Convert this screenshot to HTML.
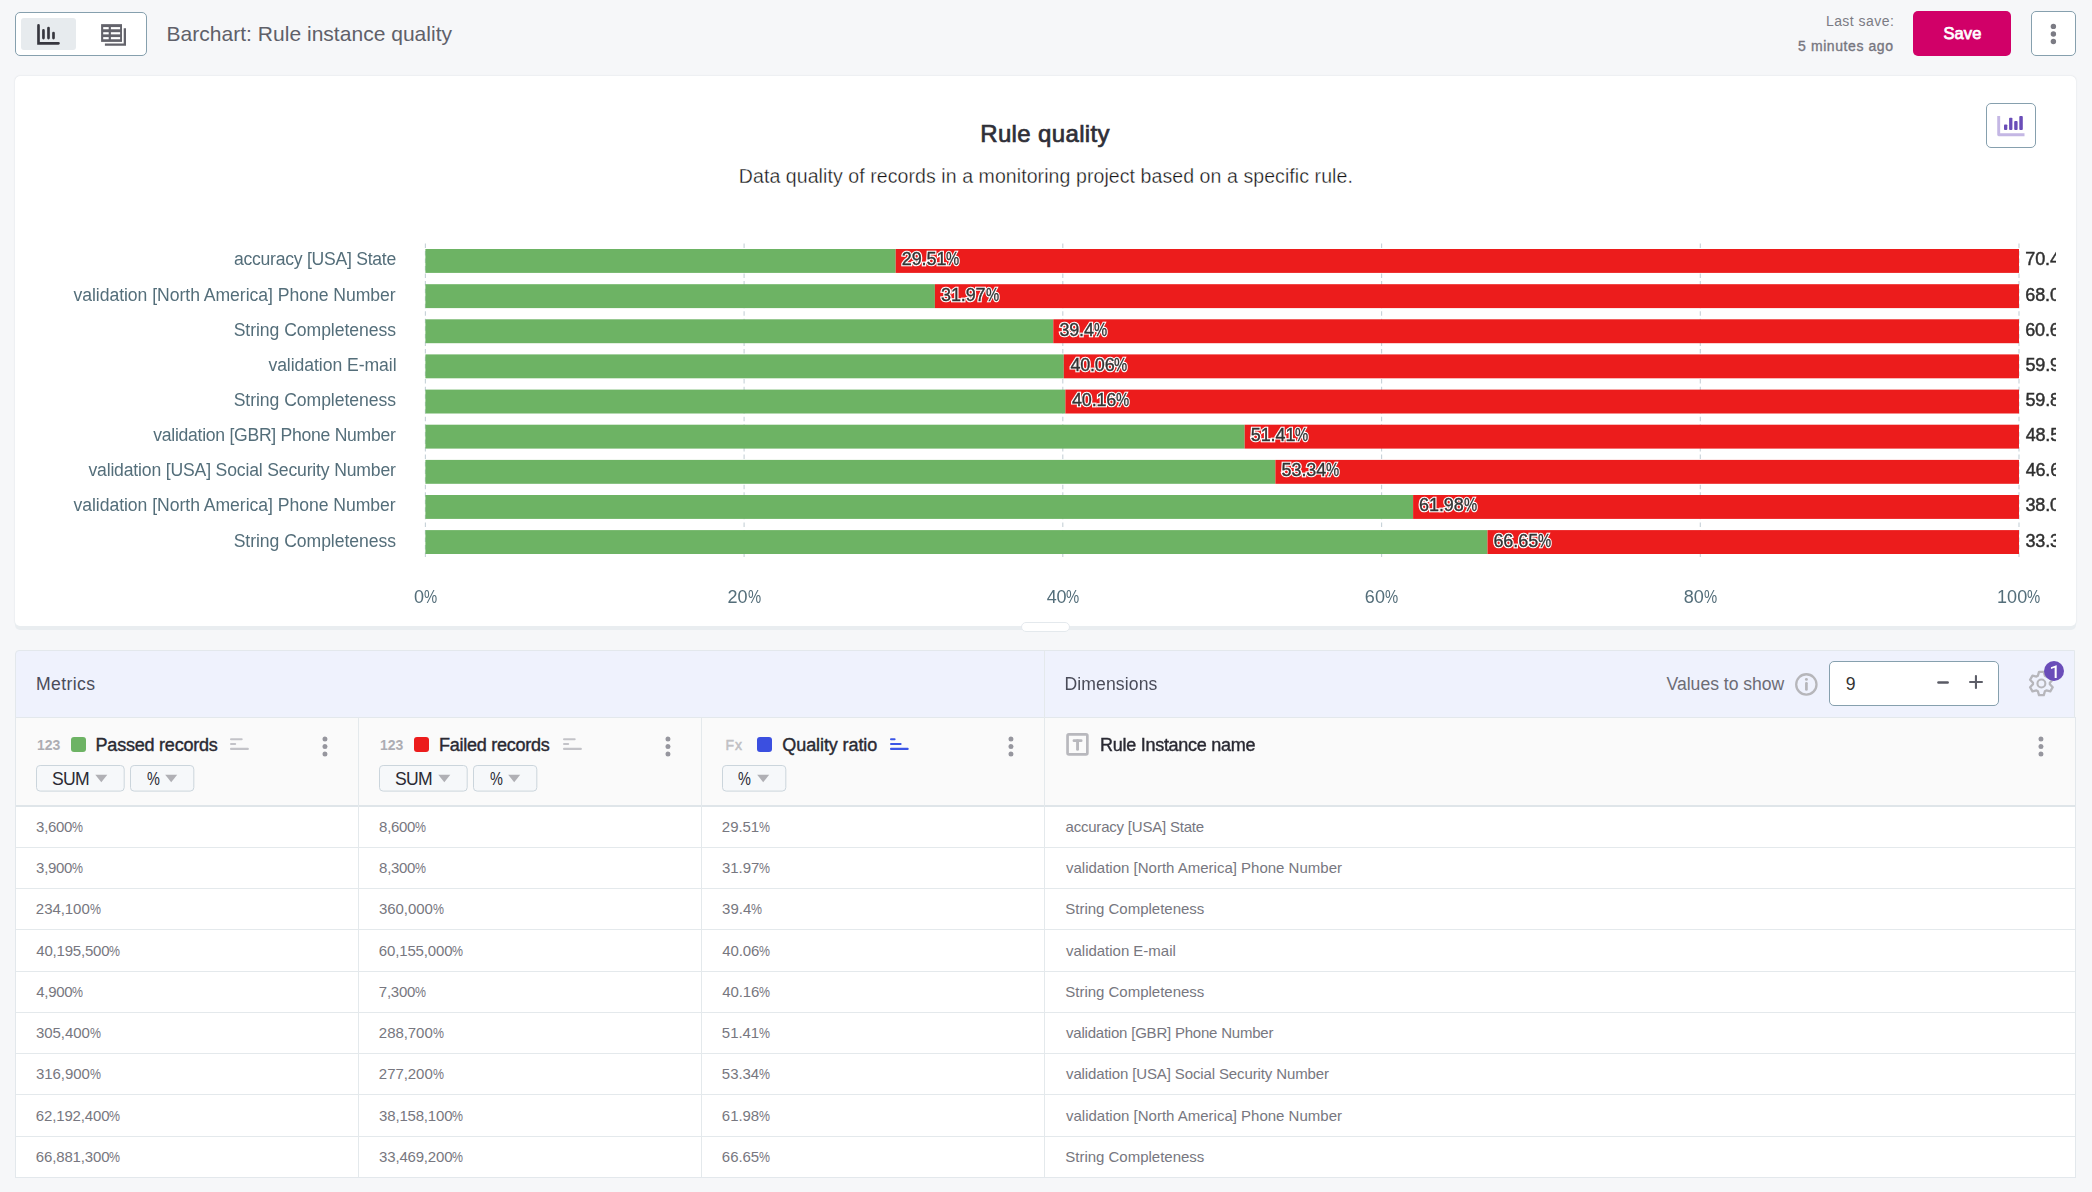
<!DOCTYPE html>
<html><head><meta charset="utf-8"><title>Barchart: Rule instance quality</title>
<style>
html,body{margin:0;padding:0}
body{width:2092px;height:1192px;background:#f6f7f9;position:relative;overflow:hidden;font-family:"Liberation Sans",sans-serif;color:#333}
.abs{position:absolute}
.t{position:absolute;white-space:pre;line-height:1}
.card{position:absolute;left:15px;top:76px;width:2061px;height:550px;background:#fff;border-radius:5px;box-shadow:0 4px 0 #e9edf0,0 0 1.5px rgba(60,80,100,.22)}
.btn{position:absolute;box-sizing:border-box;background:#fff;border:1px solid #86a0ae;border-radius:5px}
.chip{position:absolute;box-sizing:border-box;background:#f5f7fa;border:1px solid #c9d4db;border-radius:5px;height:26.4px;top:765.2px}
.tri{position:absolute;width:0;height:0;border-left:6.3px solid transparent;border-right:6.3px solid transparent;border-top:7.7px solid #b1b1b6;top:774.5px}
.hl{position:absolute;height:1px;background:#e4e9ec;left:16px;width:2059px}
.vl{position:absolute;width:1px;background:#e4e9ec}
.dot{position:absolute;width:5.2px;height:5.2px;border-radius:50%;background:#8f8f96}
.pc{display:inline-block;transform:scaleX(.823);transform-origin:0 50%}
.clipr{position:absolute;left:0;top:0;width:2056px;height:640px;overflow:hidden;will-change:transform}
</style></head><body>

<div class="btn" style="left:15px;top:12px;width:132px;height:44px"></div>
<div class="abs" style="left:21px;top:18px;width:55px;height:32px;background:#e7ebee;border-radius:3px"></div>
<svg class="abs" style="left:33px;top:20px" width="30" height="28" viewBox="0 0 30 28">
<path d="M5.5 5.4 V23.3 H25.5" fill="none" stroke="#36363e" stroke-width="2.65" stroke-linecap="round" stroke-linejoin="miter"/>
<path d="M10.45 10.4 V18.1 M15.5 8.1 V18.1 M20.5 13.1 V18.1" fill="none" stroke="#36363e" stroke-width="2.65" stroke-linecap="round"/>
</svg>
<svg class="abs" style="left:99px;top:22px" width="30" height="26" viewBox="0 0 30 26">
<path d="M5.9 22.6 H25.85 V6.2" fill="none" stroke="#63636b" stroke-width="2.3"/>
<rect x="2.1" y="2.15" width="20.9" height="17.75" fill="#63636b"/>
<rect x="4.2" y="5.1" width="5.5" height="2.15" fill="#fff"/><rect x="11.9" y="5.1" width="9.2" height="2.15" fill="#fff"/>
<rect x="4.2" y="10.2" width="5.5" height="2.15" fill="#fff"/><rect x="11.9" y="10.2" width="9.2" height="2.15" fill="#fff"/>
<rect x="4.2" y="15.1" width="5.5" height="2.15" fill="#fff"/><rect x="11.9" y="15.1" width="9.2" height="2.15" fill="#fff"/>
</svg>
<div class="t" style="left:166.55px;top:23.00px;font-size:21px;color:#5f6069;letter-spacing:0.023px;">Barchart: Rule instance quality</div>
<div class="t" style="left:1825.90px;top:14.00px;font-size:14px;color:#7b7b84;letter-spacing:0.456px;">Last save:</div>
<div class="t" style="left:1798.10px;top:39.00px;font-size:14px;color:#76767f;letter-spacing:0.575px;-webkit-text-stroke:0.35px #76767f;">5 minutes ago</div>
<div class="abs" style="left:1913px;top:11px;width:98px;height:45px;background:#d10068;border-radius:5px"></div>
<div class="t" style="left:1943.55px;top:25.00px;font-size:16.5px;color:#fff;letter-spacing:0.067px;-webkit-text-stroke:0.75px #fff;">Save</div>
<div class="btn" style="left:2031px;top:11px;width:45px;height:45px"></div>
<svg class="abs" style="left:2048.25px;top:20.50px" width="10.80" height="25.90" viewBox="0 0 10.80 25.90"><circle cx="5.40" cy="5.40" r="2.70" fill="#7b7b84"/><circle cx="5.40" cy="13.00" r="2.70" fill="#7b7b84"/><circle cx="5.40" cy="20.50" r="2.70" fill="#7b7b84"/></svg>
<div class="card"></div>
<div class="t" style="left:980.20px;top:122.00px;font-size:24px;color:#2f2f38;letter-spacing:0.359px;-webkit-text-stroke:0.7px #2f2f38;">Rule quality</div>
<div class="t" style="left:738.80px;top:167.00px;font-size:19.5px;color:#161616;letter-spacing:0.083px;-webkit-text-stroke:0.32px #fff;">Data quality of records in a monitoring project based on a specific rule.</div>
<div class="btn" style="left:1986px;top:103px;width:50px;height:45px"></div>
<svg class="abs" style="left:1994px;top:112px" width="34" height="28" viewBox="0 0 34 28">
<path d="M4.7 4.1 V22.7 H30.5" fill="none" stroke="#c4b7e4" stroke-width="2.9" stroke-linejoin="round"/>
<rect x="10" y="12.4" width="3.3" height="5.5" rx="0.9" fill="#6a4db8"/><rect x="15.1" y="5.7" width="3.3" height="12.2" rx="0.9" fill="#6a4db8"/>
<rect x="20.2" y="9.1" width="3.4" height="8.8" rx="0.9" fill="#6a4db8"/><rect x="25.3" y="4.1" width="3.5" height="13.8" rx="0.9" fill="#6a4db8"/>
</svg>
<svg class="abs" style="left:0;top:0" width="2092" height="640" viewBox="0 0 2092 640">
<line x1="425.4" y1="243.4" x2="425.4" y2="559.1" stroke="#c6d1d8" stroke-width="1.1" stroke-dasharray="4.5 3.04"/>
<line x1="744.1" y1="243.4" x2="744.1" y2="559.1" stroke="#c6d1d8" stroke-width="1.1" stroke-dasharray="4.5 3.04"/>
<line x1="1062.8" y1="243.4" x2="1062.8" y2="559.1" stroke="#c6d1d8" stroke-width="1.1" stroke-dasharray="4.5 3.04"/>
<line x1="1381.6" y1="243.4" x2="1381.6" y2="559.1" stroke="#c6d1d8" stroke-width="1.1" stroke-dasharray="4.5 3.04"/>
<line x1="1700.3" y1="243.4" x2="1700.3" y2="559.1" stroke="#c6d1d8" stroke-width="1.1" stroke-dasharray="4.5 3.04"/>
<line x1="2019.0" y1="243.4" x2="2019.0" y2="559.1" stroke="#c6d1d8" stroke-width="1.1" stroke-dasharray="4.5 3.04"/>
<rect x="425.4" y="249.0" width="470.3" height="23.9" fill="#6db364"/>
<rect x="895.7" y="249.0" width="1123.3" height="23.9" fill="#ec1c1c"/>
<rect x="425.4" y="284.2" width="509.5" height="23.9" fill="#6db364"/>
<rect x="934.9" y="284.2" width="1084.1" height="23.9" fill="#ec1c1c"/>
<rect x="425.4" y="319.3" width="627.9" height="23.9" fill="#6db364"/>
<rect x="1053.3" y="319.3" width="965.7" height="23.9" fill="#ec1c1c"/>
<rect x="425.4" y="354.4" width="638.4" height="23.9" fill="#6db364"/>
<rect x="1063.8" y="354.4" width="955.2" height="23.9" fill="#ec1c1c"/>
<rect x="425.4" y="389.6" width="640.0" height="23.9" fill="#6db364"/>
<rect x="1065.4" y="389.6" width="953.6" height="23.9" fill="#ec1c1c"/>
<rect x="425.4" y="424.7" width="819.3" height="23.9" fill="#6db364"/>
<rect x="1244.7" y="424.7" width="774.3" height="23.9" fill="#ec1c1c"/>
<rect x="425.4" y="459.9" width="850.0" height="23.9" fill="#6db364"/>
<rect x="1275.4" y="459.9" width="743.6" height="23.9" fill="#ec1c1c"/>
<rect x="425.4" y="495.0" width="987.7" height="23.9" fill="#6db364"/>
<rect x="1413.1" y="495.0" width="605.9" height="23.9" fill="#ec1c1c"/>
<rect x="425.4" y="530.1" width="1062.1" height="23.9" fill="#6db364"/>
<rect x="1487.5" y="530.1" width="531.5" height="23.9" fill="#ec1c1c"/>
</svg>
<div class="clipr">
<div class="t" style="left:233.95px;top:251.00px;font-size:17.6px;color:#546e7a;letter-spacing:-0.261px;">accuracy [USA] State</div>
<div class="t" style="left:901.82px;top:250.00px;font-size:18px;color:#fff;letter-spacing:-0.110px;-webkit-text-stroke:2.7px #fff;">29.51<span class="pc" style="width:13.18px">%</span></div>
<div class="t" style="left:901.82px;top:250.00px;font-size:18px;color:#333;letter-spacing:-0.110px;-webkit-text-stroke:0.35px #333;">29.51<span class="pc" style="width:13.18px">%</span></div>
<div class="t" style="left:2025.25px;top:250.00px;font-size:18px;color:#303030;letter-spacing:-0.110px;-webkit-text-stroke:0.45px #303030;">70.49<span class="pc" style="width:13.18px">%</span></div>
<div class="t" style="left:73.40px;top:287.00px;font-size:17.6px;color:#546e7a;letter-spacing:-0.037px;">validation [North America] Phone Number</div>
<div class="t" style="left:941.02px;top:286.00px;font-size:18px;color:#fff;letter-spacing:-0.110px;-webkit-text-stroke:2.7px #fff;">31.97<span class="pc" style="width:13.18px">%</span></div>
<div class="t" style="left:941.02px;top:286.00px;font-size:18px;color:#333;letter-spacing:-0.110px;-webkit-text-stroke:0.35px #333;">31.97<span class="pc" style="width:13.18px">%</span></div>
<div class="t" style="left:2025.25px;top:286.00px;font-size:18px;color:#303030;letter-spacing:-0.110px;-webkit-text-stroke:0.45px #303030;">68.03<span class="pc" style="width:13.18px">%</span></div>
<div class="t" style="left:233.65px;top:322.00px;font-size:17.6px;color:#546e7a;letter-spacing:-0.050px;">String Completeness</div>
<div class="t" style="left:1059.43px;top:321.00px;font-size:18px;color:#fff;letter-spacing:-0.165px;-webkit-text-stroke:2.7px #fff;">39.4<span class="pc" style="width:13.18px">%</span></div>
<div class="t" style="left:1059.43px;top:321.00px;font-size:18px;color:#333;letter-spacing:-0.165px;-webkit-text-stroke:0.35px #333;">39.4<span class="pc" style="width:13.18px">%</span></div>
<div class="t" style="left:2025.25px;top:321.00px;font-size:18px;color:#303030;letter-spacing:-0.165px;-webkit-text-stroke:0.45px #303030;">60.6<span class="pc" style="width:13.18px">%</span></div>
<div class="t" style="left:268.40px;top:357.00px;font-size:17.6px;color:#546e7a;letter-spacing:-0.056px;">validation E-mail</div>
<div class="t" style="left:1070.45px;top:356.00px;font-size:18px;color:#fff;letter-spacing:-0.210px;-webkit-text-stroke:2.7px #fff;">40.06<span class="pc" style="width:13.18px">%</span></div>
<div class="t" style="left:1070.45px;top:356.00px;font-size:18px;color:#333;letter-spacing:-0.210px;-webkit-text-stroke:0.35px #333;">40.06<span class="pc" style="width:13.18px">%</span></div>
<div class="t" style="left:2025.50px;top:356.00px;font-size:18px;color:#303030;letter-spacing:-0.160px;-webkit-text-stroke:0.45px #303030;">59.94<span class="pc" style="width:13.18px">%</span></div>
<div class="t" style="left:233.65px;top:392.00px;font-size:17.6px;color:#546e7a;letter-spacing:-0.050px;">String Completeness</div>
<div class="t" style="left:1072.04px;top:391.00px;font-size:18px;color:#fff;letter-spacing:-0.210px;-webkit-text-stroke:2.7px #fff;">40.16<span class="pc" style="width:13.18px">%</span></div>
<div class="t" style="left:1072.04px;top:391.00px;font-size:18px;color:#333;letter-spacing:-0.210px;-webkit-text-stroke:0.35px #333;">40.16<span class="pc" style="width:13.18px">%</span></div>
<div class="t" style="left:2025.50px;top:391.00px;font-size:18px;color:#303030;letter-spacing:-0.160px;-webkit-text-stroke:0.45px #303030;">59.84<span class="pc" style="width:13.18px">%</span></div>
<div class="t" style="left:153.30px;top:427.00px;font-size:17.6px;color:#546e7a;letter-spacing:-0.279px;">validation [GBR] Phone Number</div>
<div class="t" style="left:1250.82px;top:426.00px;font-size:18px;color:#fff;letter-spacing:-0.110px;-webkit-text-stroke:2.7px #fff;">51.41<span class="pc" style="width:13.18px">%</span></div>
<div class="t" style="left:1250.82px;top:426.00px;font-size:18px;color:#333;letter-spacing:-0.110px;-webkit-text-stroke:0.35px #333;">51.41<span class="pc" style="width:13.18px">%</span></div>
<div class="t" style="left:2025.75px;top:426.00px;font-size:18px;color:#303030;letter-spacing:-0.210px;-webkit-text-stroke:0.45px #303030;">48.59<span class="pc" style="width:13.18px">%</span></div>
<div class="t" style="left:88.40px;top:462.00px;font-size:17.6px;color:#546e7a;letter-spacing:-0.168px;">validation [USA] Social Security Number</div>
<div class="t" style="left:1281.58px;top:461.00px;font-size:18px;color:#fff;letter-spacing:-0.110px;-webkit-text-stroke:2.7px #fff;">53.34<span class="pc" style="width:13.18px">%</span></div>
<div class="t" style="left:1281.58px;top:461.00px;font-size:18px;color:#333;letter-spacing:-0.110px;-webkit-text-stroke:0.35px #333;">53.34<span class="pc" style="width:13.18px">%</span></div>
<div class="t" style="left:2025.75px;top:461.00px;font-size:18px;color:#303030;letter-spacing:-0.210px;-webkit-text-stroke:0.45px #303030;">46.66<span class="pc" style="width:13.18px">%</span></div>
<div class="t" style="left:73.40px;top:497.00px;font-size:17.6px;color:#546e7a;letter-spacing:-0.037px;">validation [North America] Phone Number</div>
<div class="t" style="left:1419.01px;top:496.00px;font-size:18px;color:#fff;letter-spacing:-0.060px;-webkit-text-stroke:2.7px #fff;">61.98<span class="pc" style="width:13.18px">%</span></div>
<div class="t" style="left:1419.01px;top:496.00px;font-size:18px;color:#333;letter-spacing:-0.060px;-webkit-text-stroke:0.35px #333;">61.98<span class="pc" style="width:13.18px">%</span></div>
<div class="t" style="left:2025.50px;top:496.00px;font-size:18px;color:#303030;letter-spacing:-0.160px;-webkit-text-stroke:0.45px #303030;">38.02<span class="pc" style="width:13.18px">%</span></div>
<div class="t" style="left:233.65px;top:533.00px;font-size:17.6px;color:#546e7a;letter-spacing:-0.050px;">String Completeness</div>
<div class="t" style="left:1493.43px;top:532.00px;font-size:18px;color:#fff;letter-spacing:-0.060px;-webkit-text-stroke:2.7px #fff;">66.65<span class="pc" style="width:13.18px">%</span></div>
<div class="t" style="left:1493.43px;top:532.00px;font-size:18px;color:#333;letter-spacing:-0.060px;-webkit-text-stroke:0.35px #333;">66.65<span class="pc" style="width:13.18px">%</span></div>
<div class="t" style="left:2025.50px;top:532.00px;font-size:18px;color:#303030;letter-spacing:-0.160px;-webkit-text-stroke:0.45px #303030;">33.35<span class="pc" style="width:13.18px">%</span></div>
<div class="t" style="left:413.95px;top:588.00px;font-size:18px;color:#546e7a;letter-spacing:-0.210px;">0<span class="pc" style="width:13.18px">%</span></div>
<div class="t" style="left:727.62px;top:588.00px;font-size:18px;color:#546e7a;letter-spacing:-0.051px;">20<span class="pc" style="width:13.18px">%</span></div>
<div class="t" style="left:1046.84px;top:588.00px;font-size:18px;color:#546e7a;letter-spacing:-0.301px;">40<span class="pc" style="width:13.18px">%</span></div>
<div class="t" style="left:1364.81px;top:588.00px;font-size:18px;color:#546e7a;letter-spacing:0.074px;">60<span class="pc" style="width:13.18px">%</span></div>
<div class="t" style="left:1683.78px;top:588.00px;font-size:18px;color:#546e7a;letter-spacing:-0.051px;">80<span class="pc" style="width:13.18px">%</span></div>
<div class="t" style="left:1996.95px;top:588.00px;font-size:18px;color:#546e7a;letter-spacing:0.168px;">100<span class="pc" style="width:13.18px">%</span></div>
</div>
<div class="abs" style="left:1020.5px;top:622px;width:49px;height:10px;box-sizing:border-box;background:#fff;border:1px solid #e4e9ed;border-radius:5px"></div>
<div class="abs" style="left:15px;top:717px;width:2061px;height:461px;box-sizing:border-box;background:#fff;border:1px solid #e3e8ec"></div>
<div class="abs" style="left:15px;top:650px;width:2060px;height:68px;box-sizing:border-box;background:#eff2fd;border:1px solid #e3e8ec;border-radius:4px 0 0 0"></div>
<div class="abs" style="left:16px;top:718px;width:2059px;height:87px;background:#fafafa"></div>
<div class="hl" style="top:805px;height:2px;background:#dfe5e9"></div>
<div class="vl" style="left:358px;top:718px;height:459px"></div>
<div class="vl" style="left:701px;top:718px;height:459px"></div>
<div class="vl" style="left:1044px;top:651px;height:526px"></div>
<div class="t" style="left:35.90px;top:676.00px;font-size:17.6px;color:#4a4c59;letter-spacing:0.400px;">Metrics</div>
<div class="t" style="left:1064.50px;top:676.00px;font-size:17.6px;color:#4a4c59;letter-spacing:0.106px;">Dimensions</div>
<div class="t" style="left:1666.55px;top:676.00px;font-size:17.6px;color:#6c6c75;letter-spacing:-0.019px;">Values to show</div>
<svg class="abs" style="left:1794px;top:672px" width="25" height="25" viewBox="0 0 25 25">
<circle cx="12.35" cy="12.4" r="10.15" fill="none" stroke="#b6b6ba" stroke-width="2.3"/>
<rect x="11.05" y="10" width="2.7" height="8.8" rx="1.35" fill="#b6b6ba"/><circle cx="12.4" cy="7.4" r="1.45" fill="#b6b6ba"/>
</svg>
<div class="btn" style="left:1829px;top:661px;width:170px;height:45px"></div>
<div class="t" style="left:1845.75px;top:676.00px;font-size:17.6px;color:#333;">9</div>
<svg class="abs" style="left:1930px;top:670px" width="60" height="25" viewBox="0 0 60 25">
<rect x="7.2" y="11.2" width="11.7" height="2.5" rx="1.25" fill="#5a5b65"/>
<rect x="39" y="10.9" width="14" height="2.2" rx="1" fill="#5d5e68"/><rect x="44.9" y="5" width="2.1" height="13.9" rx="1" fill="#5d5e68"/>
</svg>
<svg class="abs" style="left:2026px;top:668px" width="31" height="31" viewBox="0 0 31 31">
<path d="M17.77 3.84 L13.03 3.84 L11.88 7.77 L10.46 8.58 L6.49 7.61 L4.11 11.72 L6.94 14.69 L6.94 16.31 L4.11 19.28 L6.49 23.39 L10.46 22.42 L11.88 23.23 L13.03 27.16 L17.77 27.16 L18.92 23.23 L20.34 22.42 L24.31 23.39 L26.69 19.28 L23.86 16.31 L23.86 14.69 L26.69 11.72 L24.31 7.61 L20.34 8.58 L18.92 7.77 Z" fill="none" stroke="#b6b6bb" stroke-width="2.35" stroke-linejoin="round"/>
<circle cx="15.40" cy="15.50" r="3.95" fill="none" stroke="#b6b6bb" stroke-width="2.1"/>
</svg>
<div class="abs" style="left:2044px;top:661px;width:20px;height:20px;border-radius:50%;background:#6a4db9"></div>
<svg class="abs" style="left:2044px;top:661px" width="20" height="20" viewBox="0 0 20 20">
<path d="M12.7 4.2 V16.95 H10.65 V6.75 L6.95 8.1 V6.25 L12.4 4.2 Z" fill="#fff"/>
</svg>
<div class="t" style="left:36.95px;top:738.00px;font-size:14px;color:#adadb3;letter-spacing:0.050px;font-weight:bold;">123</div>
<div class="abs" style="left:71px;top:737px;width:15px;height:15px;border-radius:3px;background:#6db364"></div>
<div class="t" style="left:95.55px;top:736.00px;font-size:18px;color:#2a2a33;letter-spacing:-0.215px;-webkit-text-stroke:0.4px #2a2a33;">Passed records</div>
<svg class="abs" style="left:230.00px;top:737px" width="20" height="14" viewBox="0 0 20 14"><rect x="0" y="1.20" width="12.70" height="2.1" rx="1" fill="#c3c3c8"/><rect x="0" y="6.00" width="6.20" height="1.95" rx="1" fill="#c3c3c8"/><rect x="0" y="10.70" width="18.90" height="2.2" rx="1" fill="#c3c3c8"/></svg>
<svg class="abs" style="left:319.50px;top:734.00px" width="10.00" height="25.10" viewBox="0 0 10.00 25.10"><circle cx="5.00" cy="5.00" r="2.50" fill="#96969e"/><circle cx="5.00" cy="12.50" r="2.50" fill="#96969e"/><circle cx="5.00" cy="20.10" r="2.50" fill="#96969e"/></svg>
<svg class="abs" style="left:35.20px;top:764px" width="90.70" height="29" viewBox="0 0 90.70 29"><rect x="1.5" y="1.5" width="87.70" height="25.6" rx="3.6" fill="#f6f8fa" stroke="#cbd5dc" stroke-width="1"/><path d="M60.30 10.8 h12 l-6 7.4 Z" fill="#b0b0b5"/></svg>
<div class="t" style="left:52.05px;top:771.00px;font-size:17.6px;color:#2a2a33;letter-spacing:-0.750px;">SUM</div>
<svg class="abs" style="left:129.40px;top:764px" width="66.30" height="29" viewBox="0 0 66.30 29"><rect x="1.5" y="1.5" width="63.30" height="25.6" rx="3.6" fill="#f6f8fa" stroke="#cbd5dc" stroke-width="1"/><path d="M36.20 10.8 h12 l-6 7.4 Z" fill="#b0b0b5"/></svg>
<div class="t" style="left:146.50px;top:771.00px;font-size:17.6px;color:#2a2a33;"><span class="pc" style="width:12.89px">%</span></div>
<div class="t" style="left:379.95px;top:738.00px;font-size:14px;color:#adadb3;letter-spacing:0.050px;font-weight:bold;">123</div>
<div class="abs" style="left:414px;top:737px;width:15px;height:15px;border-radius:3px;background:#ec1c1c"></div>
<div class="t" style="left:439.05px;top:736.00px;font-size:18px;color:#2a2a33;letter-spacing:-0.254px;-webkit-text-stroke:0.4px #2a2a33;">Failed records</div>
<svg class="abs" style="left:563.10px;top:737px" width="20" height="14" viewBox="0 0 20 14"><rect x="0" y="1.20" width="12.70" height="2.1" rx="1" fill="#c3c3c8"/><rect x="0" y="6.00" width="6.20" height="1.95" rx="1" fill="#c3c3c8"/><rect x="0" y="10.70" width="18.90" height="2.2" rx="1" fill="#c3c3c8"/></svg>
<svg class="abs" style="left:662.60px;top:734.00px" width="10.00" height="25.10" viewBox="0 0 10.00 25.10"><circle cx="5.00" cy="5.00" r="2.50" fill="#96969e"/><circle cx="5.00" cy="12.50" r="2.50" fill="#96969e"/><circle cx="5.00" cy="20.10" r="2.50" fill="#96969e"/></svg>
<svg class="abs" style="left:378.20px;top:764px" width="90.70" height="29" viewBox="0 0 90.70 29"><rect x="1.5" y="1.5" width="87.70" height="25.6" rx="3.6" fill="#f6f8fa" stroke="#cbd5dc" stroke-width="1"/><path d="M60.30 10.8 h12 l-6 7.4 Z" fill="#b0b0b5"/></svg>
<div class="t" style="left:395.05px;top:771.00px;font-size:17.6px;color:#2a2a33;letter-spacing:-0.750px;">SUM</div>
<svg class="abs" style="left:472.40px;top:764px" width="66.30" height="29" viewBox="0 0 66.30 29"><rect x="1.5" y="1.5" width="63.30" height="25.6" rx="3.6" fill="#f6f8fa" stroke="#cbd5dc" stroke-width="1"/><path d="M36.20 10.8 h12 l-6 7.4 Z" fill="#b0b0b5"/></svg>
<div class="t" style="left:489.50px;top:771.00px;font-size:17.6px;color:#2a2a33;"><span class="pc" style="width:12.89px">%</span></div>
<div class="t" style="left:725.45px;top:738.00px;font-size:14px;color:#c0c0c4;letter-spacing:1.050px;-webkit-text-stroke:0.5px #c0c0c4;">Fx</div>
<div class="abs" style="left:757px;top:737px;width:15px;height:15px;border-radius:3px;background:#3b4fe0"></div>
<div class="t" style="left:782.35px;top:736.00px;font-size:18px;color:#2a2a33;letter-spacing:-0.096px;-webkit-text-stroke:0.4px #2a2a33;">Quality ratio</div>
<svg class="abs" style="left:890.20px;top:737px" width="20" height="14" viewBox="0 0 20 14"><rect x="0" y="1.20" width="5.60" height="2.1" rx="1" fill="#3b55e6"/><rect x="0" y="6.00" width="11.60" height="1.95" rx="1" fill="#3b55e6"/><rect x="0" y="10.70" width="18.70" height="2.2" rx="1" fill="#3b55e6"/></svg>
<svg class="abs" style="left:1005.60px;top:734.00px" width="10.00" height="25.10" viewBox="0 0 10.00 25.10"><circle cx="5.00" cy="5.00" r="2.50" fill="#96969e"/><circle cx="5.00" cy="12.50" r="2.50" fill="#96969e"/><circle cx="5.00" cy="20.10" r="2.50" fill="#96969e"/></svg>
<svg class="abs" style="left:721.30px;top:764px" width="66.30" height="29" viewBox="0 0 66.30 29"><rect x="1.5" y="1.5" width="63.30" height="25.6" rx="3.6" fill="#f6f8fa" stroke="#cbd5dc" stroke-width="1"/><path d="M36.20 10.8 h12 l-6 7.4 Z" fill="#b0b0b5"/></svg>
<div class="t" style="left:738.40px;top:771.00px;font-size:17.6px;color:#2a2a33;"><span class="pc" style="width:12.89px">%</span></div>
<svg class="abs" style="left:1066px;top:733px" width="24" height="24" viewBox="0 0 24 24"><rect x="1.55" y="1.45" width="19.8" height="19.9" rx="1.4" fill="none" stroke="#b8b8bd" stroke-width="2.7"/><rect x="6.6" y="6.3" width="9.9" height="2.7" rx="1.3" fill="#b8b8bd"/><rect x="10.1" y="6.3" width="2.9" height="11.5" rx="1.4" fill="#b8b8bd"/></svg>
<div class="t" style="left:1100.05px;top:736.00px;font-size:18px;color:#2a2a33;letter-spacing:-0.274px;-webkit-text-stroke:0.4px #2a2a33;">Rule Instance name</div>
<svg class="abs" style="left:2035.60px;top:734.00px" width="10.00" height="25.10" viewBox="0 0 10.00 25.10"><circle cx="5.00" cy="5.00" r="2.50" fill="#96969e"/><circle cx="5.00" cy="12.50" r="2.50" fill="#96969e"/><circle cx="5.00" cy="20.10" r="2.50" fill="#96969e"/></svg>
<div class="t" style="left:36.10px;top:819.00px;font-size:15px;color:#777780;letter-spacing:-0.296px;">3,600<span class="pc" style="width:10.99px">%</span></div>
<div class="t" style="left:379.10px;top:819.00px;font-size:15px;color:#777780;letter-spacing:-0.296px;">8,600<span class="pc" style="width:10.99px">%</span></div>
<div class="t" style="left:721.85px;top:819.00px;font-size:15px;color:#777780;letter-spacing:-0.045px;">29.51<span class="pc" style="width:10.99px">%</span></div>
<div class="t" style="left:1065.50px;top:819.00px;font-size:15px;color:#777780;letter-spacing:-0.206px;">accuracy [USA] State</div>
<div class="hl" style="top:847px"></div>
<div class="t" style="left:36.10px;top:860.00px;font-size:15px;color:#777780;letter-spacing:-0.296px;">3,900<span class="pc" style="width:10.99px">%</span></div>
<div class="t" style="left:379.10px;top:860.00px;font-size:15px;color:#777780;letter-spacing:-0.296px;">8,300<span class="pc" style="width:10.99px">%</span></div>
<div class="t" style="left:722.10px;top:860.00px;font-size:15px;color:#777780;letter-spacing:-0.095px;">31.97<span class="pc" style="width:10.99px">%</span></div>
<div class="t" style="left:1066.00px;top:860.00px;font-size:15px;color:#777780;">validation [North America] Phone Number</div>
<div class="hl" style="top:888px"></div>
<div class="t" style="left:35.85px;top:901.00px;font-size:15px;color:#777780;letter-spacing:-0.055px;">234,100<span class="pc" style="width:10.99px">%</span></div>
<div class="t" style="left:379.10px;top:901.00px;font-size:15px;color:#777780;letter-spacing:-0.091px;">360,000<span class="pc" style="width:10.99px">%</span></div>
<div class="t" style="left:722.10px;top:901.00px;font-size:15px;color:#777780;letter-spacing:0.025px;">39.4<span class="pc" style="width:10.99px">%</span></div>
<div class="t" style="left:1065.25px;top:901.00px;font-size:15px;color:#777780;letter-spacing:-0.009px;">String Completeness</div>
<div class="hl" style="top:929px"></div>
<div class="t" style="left:36.35px;top:943.00px;font-size:15px;color:#777780;letter-spacing:-0.210px;">40,195,500<span class="pc" style="width:10.99px">%</span></div>
<div class="t" style="left:378.85px;top:943.00px;font-size:15px;color:#777780;letter-spacing:-0.159px;">60,155,000<span class="pc" style="width:10.99px">%</span></div>
<div class="t" style="left:722.35px;top:943.00px;font-size:15px;color:#777780;letter-spacing:-0.145px;">40.06<span class="pc" style="width:10.99px">%</span></div>
<div class="t" style="left:1066.00px;top:943.00px;font-size:15px;color:#777780;letter-spacing:-0.016px;">validation E-mail</div>
<div class="hl" style="top:971px"></div>
<div class="t" style="left:36.35px;top:984.00px;font-size:15px;color:#777780;letter-spacing:-0.346px;">4,900<span class="pc" style="width:10.99px">%</span></div>
<div class="t" style="left:378.85px;top:984.00px;font-size:15px;color:#777780;letter-spacing:-0.246px;">7,300<span class="pc" style="width:10.99px">%</span></div>
<div class="t" style="left:722.35px;top:984.00px;font-size:15px;color:#777780;letter-spacing:-0.145px;">40.16<span class="pc" style="width:10.99px">%</span></div>
<div class="t" style="left:1065.25px;top:984.00px;font-size:15px;color:#777780;letter-spacing:-0.009px;">String Completeness</div>
<div class="hl" style="top:1012px"></div>
<div class="t" style="left:36.10px;top:1025.00px;font-size:15px;color:#777780;letter-spacing:-0.091px;">305,400<span class="pc" style="width:10.99px">%</span></div>
<div class="t" style="left:378.85px;top:1025.00px;font-size:15px;color:#777780;letter-spacing:-0.055px;">288,700<span class="pc" style="width:10.99px">%</span></div>
<div class="t" style="left:721.85px;top:1025.00px;font-size:15px;color:#777780;letter-spacing:-0.045px;">51.41<span class="pc" style="width:10.99px">%</span></div>
<div class="t" style="left:1066.00px;top:1025.00px;font-size:15px;color:#777780;letter-spacing:-0.214px;">validation [GBR] Phone Number</div>
<div class="hl" style="top:1053px"></div>
<div class="t" style="left:36.10px;top:1066.00px;font-size:15px;color:#777780;letter-spacing:-0.091px;">316,900<span class="pc" style="width:10.99px">%</span></div>
<div class="t" style="left:378.85px;top:1066.00px;font-size:15px;color:#777780;letter-spacing:-0.055px;">277,200<span class="pc" style="width:10.99px">%</span></div>
<div class="t" style="left:721.85px;top:1066.00px;font-size:15px;color:#777780;letter-spacing:-0.045px;">53.34<span class="pc" style="width:10.99px">%</span></div>
<div class="t" style="left:1066.00px;top:1066.00px;font-size:15px;color:#777780;letter-spacing:-0.123px;">validation [USA] Social Security Number</div>
<div class="hl" style="top:1094px"></div>
<div class="t" style="left:35.85px;top:1108.00px;font-size:15px;color:#777780;letter-spacing:-0.160px;">62,192,400<span class="pc" style="width:10.99px">%</span></div>
<div class="t" style="left:379.10px;top:1108.00px;font-size:15px;color:#777780;letter-spacing:-0.184px;">38,158,100<span class="pc" style="width:10.99px">%</span></div>
<div class="t" style="left:721.85px;top:1108.00px;font-size:15px;color:#777780;letter-spacing:-0.045px;">61.98<span class="pc" style="width:10.99px">%</span></div>
<div class="t" style="left:1066.00px;top:1108.00px;font-size:15px;color:#777780;">validation [North America] Phone Number</div>
<div class="hl" style="top:1136px"></div>
<div class="t" style="left:35.85px;top:1149.00px;font-size:15px;color:#777780;letter-spacing:-0.160px;">66,881,300<span class="pc" style="width:10.99px">%</span></div>
<div class="t" style="left:379.10px;top:1149.00px;font-size:15px;color:#777780;letter-spacing:-0.184px;">33,469,200<span class="pc" style="width:10.99px">%</span></div>
<div class="t" style="left:721.85px;top:1149.00px;font-size:15px;color:#777780;letter-spacing:-0.045px;">66.65<span class="pc" style="width:10.99px">%</span></div>
<div class="t" style="left:1065.25px;top:1149.00px;font-size:15px;color:#777780;letter-spacing:-0.009px;">String Completeness</div>
</body></html>
